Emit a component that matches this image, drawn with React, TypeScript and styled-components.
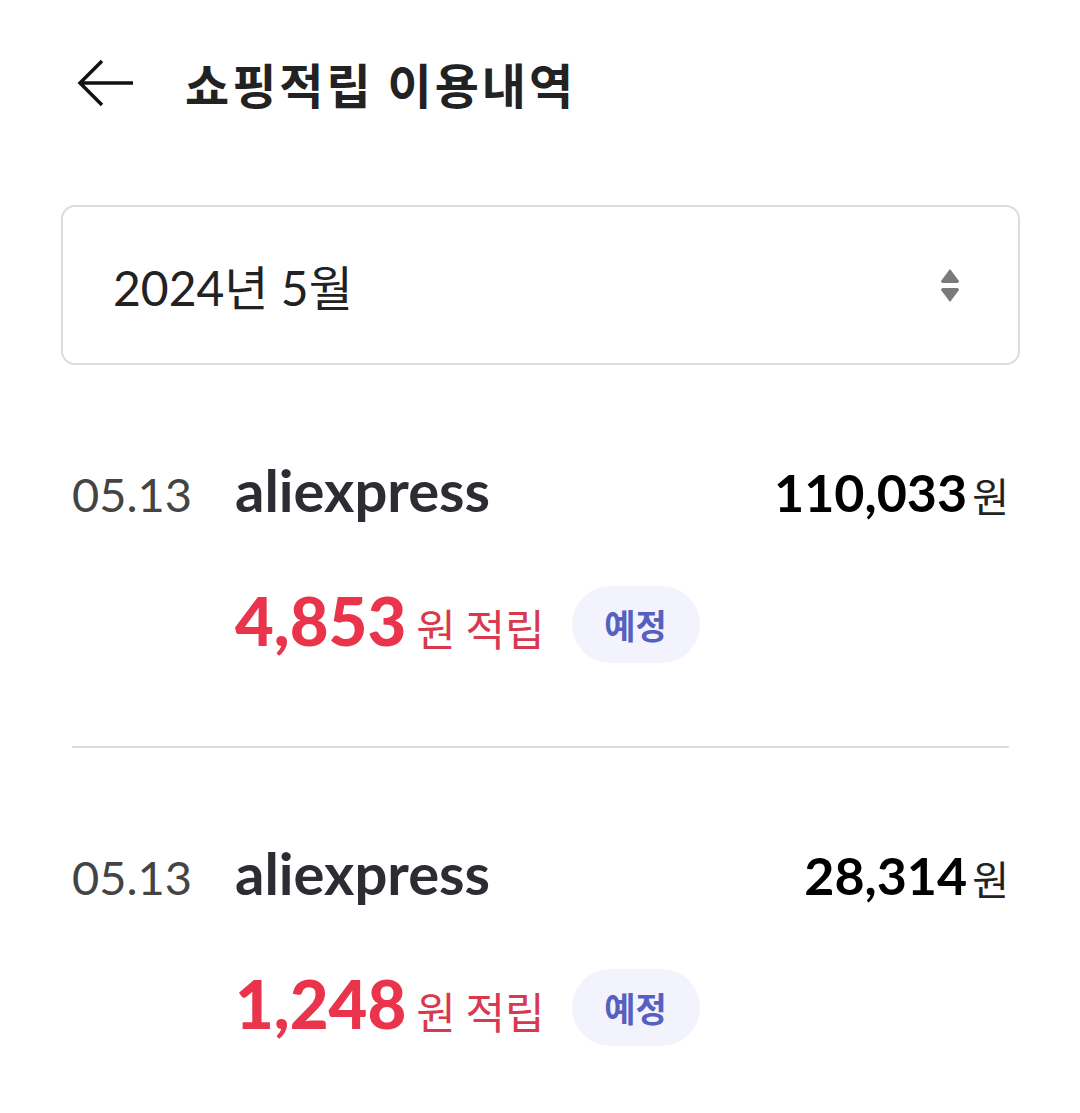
import React from 'react';
import styled, { createGlobalStyle } from 'styled-components';

const GlobalStyle = createGlobalStyle`
  html, body {
    margin: 0;
    padding: 0;
    background: #fff;
  }
  body {
    font-family: Lato, "Noto Sans CJK KR", sans-serif;
    color: #222;
  }
`;

const Page = styled.div`
  width: 1080px;
  min-height: 1113px;
  box-sizing: border-box;
  padding: 0 60px 0 61px;
`;

const Header = styled.header`
  display: flex;
  align-items: center;
  height: 205px;
  padding: 0 0 40px 16px;
  box-sizing: border-box;
  gap: 50px;
`;

const BackButton = styled.button`
  border: 0;
  background: none;
  padding: 0;
  display: flex;
  align-items: center;
  cursor: pointer;
`;

const Title = styled.h1`
  margin: 0;
  font-family: "Noto Sans CJK KR", sans-serif;
  font-weight: 700;
  font-size: 48px;
  letter-spacing: 3px;
  line-height: 60px;
  color: #222;
`;

const Select = styled.div`
  height: 160px;
  box-sizing: border-box;
  border: 2px solid #dcdcdc;
  border-radius: 14px;
  display: flex;
  align-items: center;
  justify-content: space-between;
  padding: 0 58px 0 50px;
`;

const SelectText = styled.span`
  font-family: Lato, "Noto Sans CJK KR", sans-serif;
  font-size: 48px;
  color: #222;
`;

const List = styled.ul`
  list-style: none;
  margin: 0;
  padding: 0 11px;
`;

const Item = styled.li<{ $last?: boolean }>`
  padding: 95px 0 80px;
  border-bottom: ${(p) => (p.$last ? 'none' : '2px solid #dedede')};
`;

const TopLine = styled.div`
  display: grid;
  grid-template-columns: 163px 1fr auto;
  align-items: baseline;
  line-height: 60px;
`;

const DateText = styled.span`
  font-size: 47px;
  color: #444;
`;

const Shop = styled.span`
  font-size: 58px;
  font-weight: 700;
  color: #2b2d33;
`;

const Amount = styled.span`
  font-size: 52px;
  font-weight: 700;
  color: #000;
  display: flex;
  align-items: baseline;
  gap: 5px;
`;

const Won = styled.span<{ $color?: string; $size?: number }>`
  font-family: "Noto Sans CJK KR", sans-serif;
  font-weight: 400;
  font-size: ${(p) => p.$size ?? 32}px;
  color: ${(p) => p.$color ?? '#222'};
`;

const BottomLine = styled.div`
  display: flex;
  align-items: center;
  padding-left: 163px;
  margin-top: 57px;
  gap: 27px;
  line-height: 77px;
`;

const Reward = styled.span`
  display: flex;
  align-items: baseline;
  gap: 10px;
`;

const RewardNum = styled.span`
  font-size: 67px;
  font-weight: 900;
  color: #e9344b;
`;

const Badge = styled.span`
  display: inline-flex;
  align-items: center;
  justify-content: center;
  width: 128px;
  height: 77px;
  border-radius: 39px;
  background: #f3f3fd;
  color: #5660c0;
  font-family: "Noto Sans CJK KR", sans-serif;
  font-weight: 700;
  font-size: 34px;
`;

const items = [
  { date: '05.13', shop: 'aliexpress', amount: '110,033', reward: '4,853' },
  { date: '05.13', shop: 'aliexpress', amount: '28,314', reward: '1,248' },
];

export default function App() {
  return (
    <>
      <GlobalStyle />
      <Page>
        <Header>
          <BackButton aria-label="뒤로">
            <svg width="58" height="48" viewBox="0 0 58 48" fill="none">
              <path d="M56 24H3M25 2L3 24l22 22" stroke="#111" strokeWidth="3.5" />
            </svg>
          </BackButton>
          <Title>쇼핑적립 이용내역</Title>
        </Header>
        <Select>
          <SelectText>2024년 5월</SelectText>
          <svg width="20" height="37" viewBox="0 0 20 37">
            <path d="M10 2 L19 14 Q19 16 17 16 H3 Q1 16 1 14 Z" fill="#7a7a7a" />
            <path d="M10 35 L19 23 Q19 21 17 21 H3 Q1 21 1 23 Z" fill="#7a7a7a" />
          </svg>
        </Select>
        <List>
          {items.map((it, i) => (
            <Item key={i} $last={i === items.length - 1}>
              <TopLine>
                <DateText>{it.date}</DateText>
                <Shop>{it.shop}</Shop>
                <Amount>
                  {it.amount}
                  <Won $size={40}>원</Won>
                </Amount>
              </TopLine>
              <BottomLine>
                <Reward>
                  <RewardNum>{it.reward}</RewardNum>
                  <Won $size={43} $color="#d8394f">원 적립</Won>
                </Reward>
                <Badge>예정</Badge>
              </BottomLine>
            </Item>
          ))}
        </List>
      </Page>
    </>
  );
}
